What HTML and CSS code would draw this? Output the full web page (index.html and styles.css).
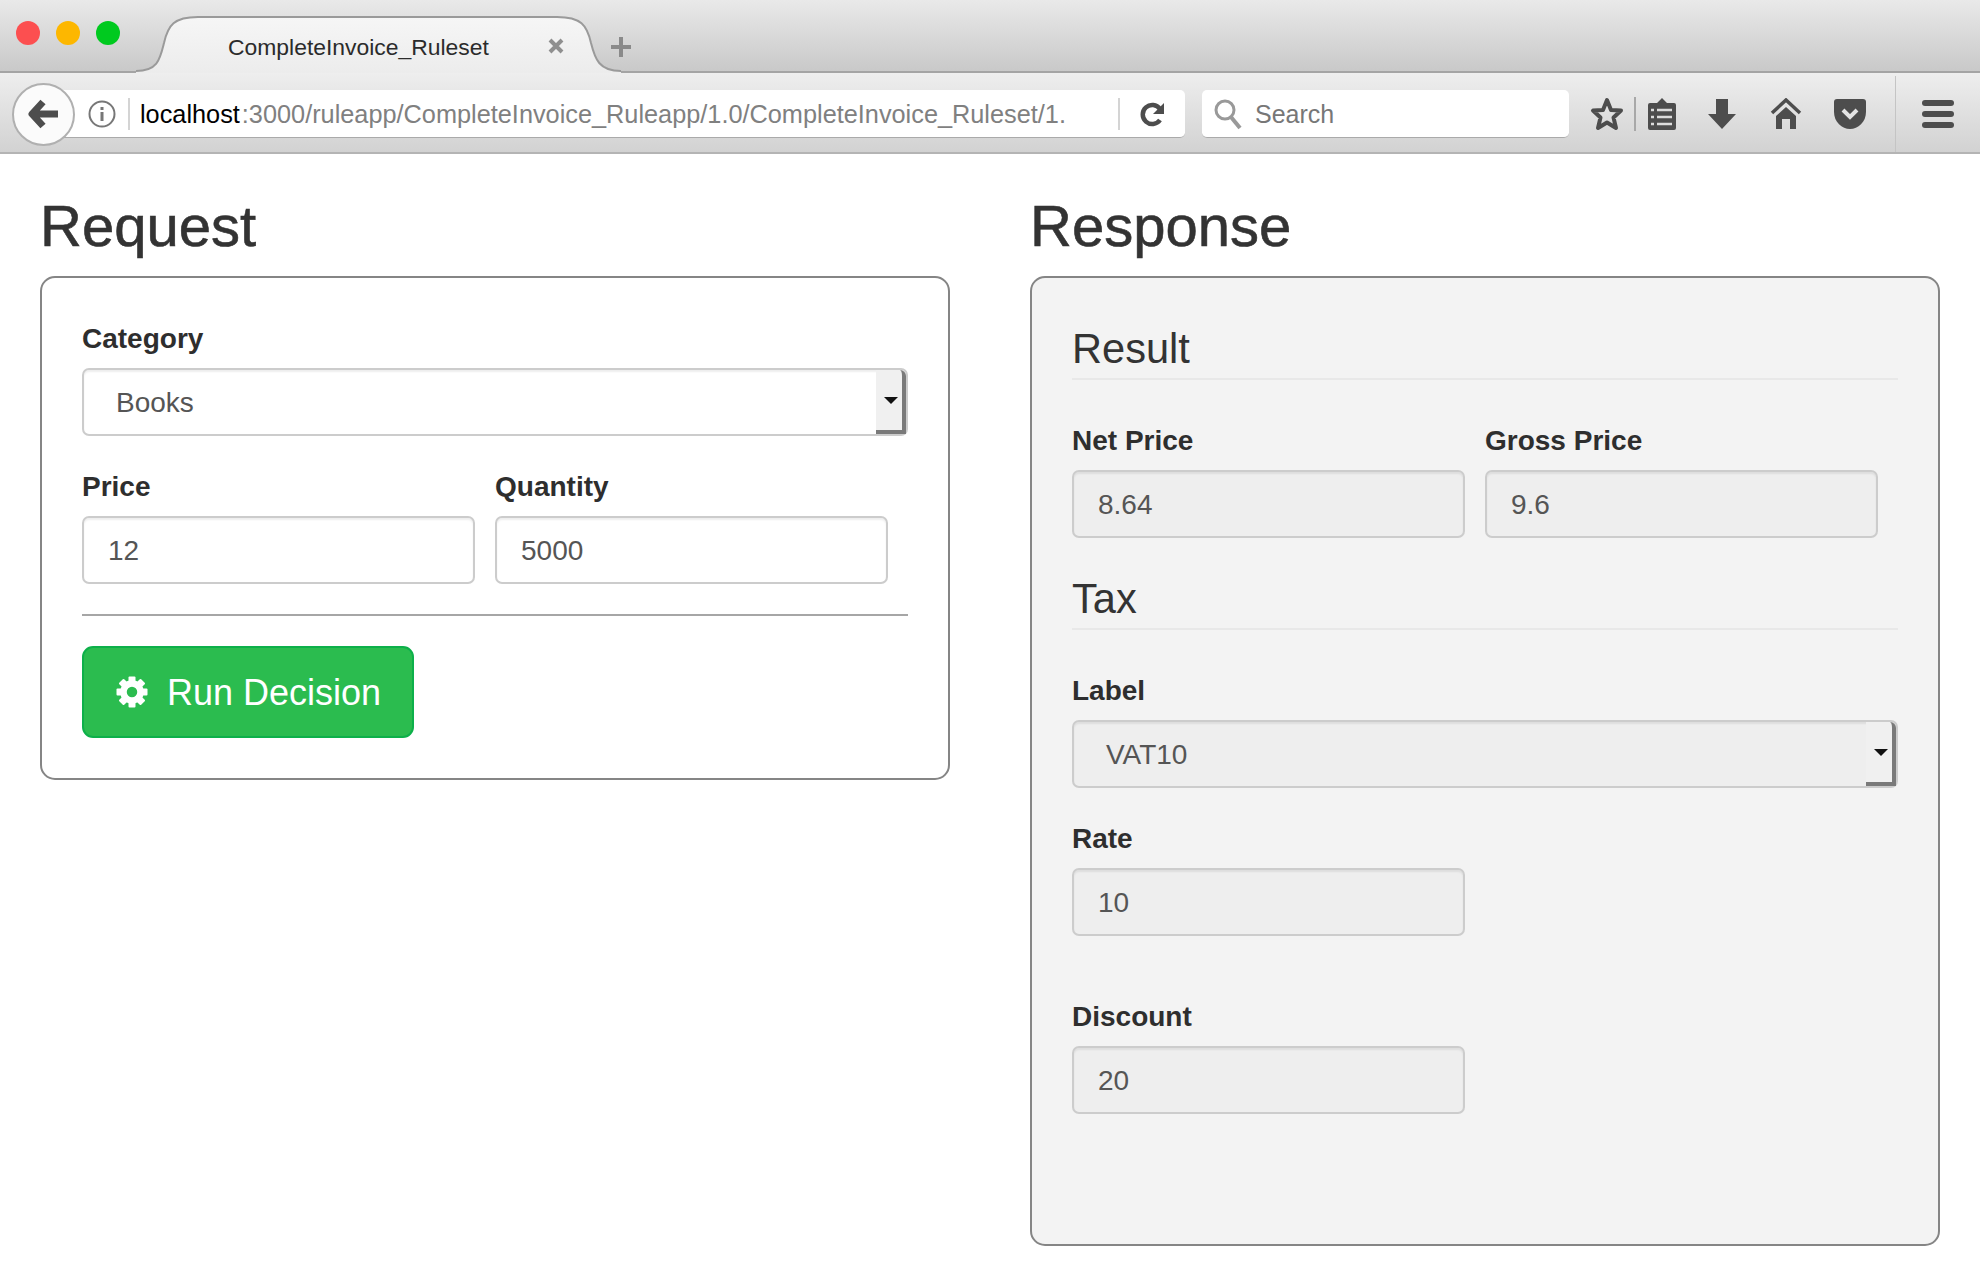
FILE: index.html
```html
<!DOCTYPE html>
<html lang="en">
<head>
    <meta charset="UTF-8">
    <title>CompleteInvoice_Ruleset</title>
    <link rel="stylesheet" href="styles.css">
</head>
<body>

<header class="browser">
    <div class="tabstrip">
        <div class="lights">
            <span class="light red"></span>
            <span class="light yellow"></span>
            <span class="light green"></span>
        </div>
        <div class="tab">
            <svg class="tab-shape" width="485" height="58" viewBox="0 0 485 58">
                <defs>
                    <linearGradient id="tabFill" x1="0" y1="0" x2="0" y2="1">
                        <stop offset="0" stop-color="#f6f6f6"/>
                        <stop offset="1" stop-color="#ececec"/>
                    </linearGradient>
                </defs>
                <path d="M0 56 C22 56 24 44 28 28 C32 10 38 2 62 2 L421 2 C445 2 451 10 455 28 C459 44 463 56 485 56 L485 58 L0 58 Z" fill="url(#tabFill)"/>
                <path d="M0 56 C22 56 24 44 28 28 C32 10 38 2 62 2 L421 2 C445 2 451 10 455 28 C459 44 463 56 485 56" fill="none" stroke="#9a9a9a" stroke-width="2"/>
            </svg>
            <span class="tab-title">CompleteInvoice_Ruleset</span>
            <svg class="tab-close" width="16" height="16" viewBox="0 0 16 16">
                <path d="M2 2 L14 14 M14 2 L2 14" stroke="#8f8f8f" stroke-width="4"/>
            </svg>
        </div>
        <svg class="newtab" width="22" height="22" viewBox="0 0 22 22">
            <path d="M11 1 V21 M1 11 H21" stroke="#8a8a8a" stroke-width="4"/>
        </svg>
    </div>

    <div class="toolbar">
        <div class="back">
            <svg width="32" height="32" viewBox="0 0 32 32">
                <path d="M15 4 L4 16 L15 28 M5 16 H30" fill="none" stroke="#4d4d4d" stroke-width="7" stroke-linejoin="round"/>
            </svg>
        </div>
        <div class="urlbar">
            <svg class="info" width="28" height="28" viewBox="0 0 28 28">
                <circle cx="14" cy="14" r="12.5" fill="none" stroke="#777" stroke-width="2"/>
                <rect x="12.5" y="12" width="3" height="9" fill="#777"/>
                <rect x="12.5" y="7" width="3" height="3" fill="#777"/>
            </svg>
            <span class="sep-v"></span>
            <span class="url"><span class="host">localhost</span>:3000/ruleapp/CompleteInvoice_Ruleapp/1.0/CompleteInvoice_Ruleset/1.</span>
            <span class="sep-v reload-sep"></span>
            <svg class="reload" width="26" height="28" viewBox="0 0 26 28">
                <path d="M20 9 A9.5 9.5 0 1 0 20 20" fill="none" stroke="#4d4d4d" stroke-width="4.5"/>
                <path d="M24 3 V14 H13 Z" fill="#4d4d4d"/>
            </svg>
        </div>
        <div class="searchbar">
            <svg width="30" height="32" viewBox="0 0 30 32">
                <circle cx="12" cy="12" r="9" fill="none" stroke="#999" stroke-width="3"/>
                <path d="M18 19 L27 30" stroke="#999" stroke-width="4"/>
            </svg>
            <span class="search-text">Search</span>
        </div>
        <div class="tools">
            <div class="tool star">
                <svg width="34" height="34" viewBox="0 0 34 34">
                    <path d="M17 3 L21 13 L31 13.5 L23.5 20.5 L26 31 L17 25.5 L8 31 L10.5 20.5 L3 13.5 L13 13 Z" fill="none" stroke="#4d4d4d" stroke-width="4" stroke-linejoin="round"/>
                </svg>
            </div>
            <span class="tool-sep"></span>
            <div class="tool clip">
                <svg width="30" height="34" viewBox="0 0 30 34">
                    <path d="M3 6 H10 L15 1 L20 6 H27 Q29 6 29 8 V31 Q29 33 27 33 H3 Q1 33 1 31 V8 Q1 6 3 6 Z" fill="#4d4d4d"/>
                    <path d="M10 13 H25 M10 20 H25 M10 27 H25" stroke="#dcdcdc" stroke-width="2.5"/>
                    <path d="M4 13 H7 M4 20 H7 M4 27 H7" stroke="#dcdcdc" stroke-width="2.5"/>
                </svg>
            </div>
            <div class="tool wide">
                <svg width="30" height="32" viewBox="0 0 30 32">
                    <path d="M9 1 H21 V16 H29 L15 31 L1 16 H9 Z" fill="#4d4d4d"/>
                </svg>
            </div>
            <div class="tool wide">
                <svg width="32" height="32" viewBox="0 0 32 32">
                    <path d="M2 15 L16 2 L30 15" fill="none" stroke="#4d4d4d" stroke-width="3.5"/>
                    <path d="M16 9 L26 18 V31 H20 V21 H12 V31 H6 V18 Z" fill="#4d4d4d"/>
                </svg>
            </div>
            <div class="tool wide">
                <svg width="32" height="32" viewBox="0 0 32 32">
                    <path d="M3 1 H29 Q32 1 32 4 V14 C32 24 24 31 16 31 C8 31 0 24 0 14 V4 Q0 1 3 1 Z" fill="#4d4d4d"/>
                    <path d="M9 12 L16 19 L23 12" fill="none" stroke="#e4e4e4" stroke-width="4"/>
                </svg>
            </div>
            <span class="tool-divider"></span>
            <div class="tool menu">
                <span class="bar"></span>
                <span class="bar"></span>
                <span class="bar"></span>
            </div>
        </div>
    </div>
</header>

<main class="page">
    <section>
        <h2>Request</h2>
        <div class="panel">
            <label class="field-label">Category</label>
            <div class="select"><span class="select-value">Books</span><span class="select-arrow"></span></div>

            <div class="row row-next">
                <div>
                    <label class="field-label">Price</label>
                    <input class="text-input" type="text" value="12">
                </div>
                <div>
                    <label class="field-label">Quantity</label>
                    <input class="text-input" type="text" value="5000">
                </div>
            </div>

            <hr class="divider">

            <button class="run-button" type="button">
                <svg width="32" height="32" viewBox="0 0 32 32">
                    <circle cx="16" cy="16" r="8.5" fill="none" stroke="#fff" stroke-width="6.5"/>
                    <g fill="#fff">
                        <rect x="12.5" y="0.5" width="7" height="6" rx="1"/>
                        <rect x="12.5" y="25.5" width="7" height="6" rx="1"/>
                        <rect x="0.5" y="12.5" width="6" height="7" rx="1"/>
                        <rect x="25.5" y="12.5" width="6" height="7" rx="1"/>
                        <rect x="12.5" y="0.5" width="7" height="6" rx="1" transform="rotate(45 16 16)"/>
                        <rect x="12.5" y="25.5" width="7" height="6" rx="1" transform="rotate(45 16 16)"/>
                        <rect x="0.5" y="12.5" width="6" height="7" rx="1" transform="rotate(45 16 16)"/>
                        <rect x="25.5" y="12.5" width="6" height="7" rx="1" transform="rotate(45 16 16)"/>
                    </g>
                </svg>
                <span class="run-text">Run Decision</span>
            </button>
        </div>
    </section>

    <section>
        <h2>Response</h2>
        <div class="panel panel-response">
            <h3>Result</h3>
            <div class="row row-first">
                <div>
                    <label class="field-label">Net Price</label>
                    <input class="text-input" type="text" value="8.64" disabled>
                </div>
                <div>
                    <label class="field-label">Gross Price</label>
                    <input class="text-input" type="text" value="9.6" disabled>
                </div>
            </div>

            <h3 class="tax-title">Tax</h3>
            <div class="row-first">
                <label class="field-label">Label</label>
                <div class="select select-disabled"><span class="select-value">VAT10</span><span class="select-arrow"></span></div>
            </div>

            <div class="row row-next">
                <div>
                    <label class="field-label">Rate</label>
                    <input class="text-input" type="text" value="10" disabled>
                </div>
            </div>

            <div class="row row-discount">
                <div>
                    <label class="field-label">Discount</label>
                    <input class="text-input" type="text" value="20" disabled>
                </div>
            </div>
        </div>
    </section>
</main>

</body>
</html>
```

FILE: styles.css
```css
body {
    font-family: "Liberation Sans", Arial, sans-serif;
    background-color: #fff;
    color: #333;
    margin: 0;
    padding: 0;
}

/* Browser chrome */
.browser {
    height: 154px;
    box-sizing: border-box;
}
.tabstrip {
    height: 73px;
    box-sizing: border-box;
    display: flex;
    align-items: flex-start;
    background: linear-gradient(#e9e9e9, #c9c9c9);
    border-bottom: 2px solid #a4a4a4;
}
.lights {
    display: flex;
    gap: 16px;
    margin: 21px 0 0 16px;
    width: 128px;
    flex-shrink: 0;
}
.light {
    width: 24px;
    height: 24px;
    border-radius: 50%;
}
.red { background-color: #fc4f50; }
.yellow { background-color: #fdb700; }
.green { background-color: #00ca1f; }
.tab {
    position: relative;
    width: 485px;
    height: 58px;
    margin-left: -8px;
    margin-top: 15px;
    flex-shrink: 0;
}
.tab-shape {
    position: absolute;
    top: 0;
    left: 0;
}
.tab-title {
    position: absolute;
    top: 18px;
    left: 92px;
    font-size: 22.9px;
    line-height: 28px;
    color: #2b2b2b;
}
.tab-close {
    position: absolute;
    top: 23px;
    left: 412px;
}
.newtab {
    margin: 36px 0 0 -11px;
}
.toolbar {
    height: 81px;
    box-sizing: border-box;
    display: flex;
    align-items: center;
    padding: 3px 0 0 12px;
    background: linear-gradient(#eeeeee, #d2d2d2);
    border-bottom: 2px solid #b4b4b4;
}
.back {
    position: relative;
    z-index: 1;
    width: 63px;
    height: 63px;
    box-sizing: border-box;
    border: 2px solid #b0b0b0;
    border-radius: 50%;
    background-color: #fbfbfb;
    display: flex;
    align-items: center;
    justify-content: center;
    flex-shrink: 0;
}
.urlbar {
    width: 1125px;
    height: 48px;
    margin-left: -15px;
    padding-left: 28px;
    box-sizing: border-box;
    display: flex;
    align-items: center;
    background-color: #fff;
    border-bottom: 1px solid #aaa;
    border-radius: 0 5px 5px 0;
    flex-shrink: 0;
}
.info {
    flex-shrink: 0;
}
.sep-v {
    width: 2px;
    height: 32px;
    background-color: #d4d4d4;
    margin-left: 12px;
    flex-shrink: 0;
}
.url {
    margin-left: 10px;
    padding-top: 2px;
    width: 930px;
    font-size: 25.3px;
    color: #808080;
    white-space: nowrap;
    overflow: hidden;
}
.host {
    color: #000;
    margin-right: 2px;
}
.reload-sep {
    margin-left: 48px;
}
.reload {
    margin-left: 20px;
}
.searchbar {
    width: 367px;
    height: 48px;
    margin-left: 17px;
    padding-left: 11px;
    box-sizing: border-box;
    display: flex;
    align-items: center;
    background-color: #fff;
    border-bottom: 1px solid #aaa;
    border-radius: 5px;
    flex-shrink: 0;
}
.search-text {
    margin-left: 12px;
    padding-top: 2px;
    font-size: 25px;
    color: #777;
}
.tools {
    display: flex;
    align-items: center;
    height: 100%;
    margin-left: 9px;
    flex: 1;
}
.tool {
    display: flex;
    align-items: center;
    justify-content: center;
    flex-shrink: 0;
}
.star { width: 56px; }
.star svg { margin-left: 1px; }
.clip { width: 54px; }
.clip svg { margin-right: 3px; }
.wide { width: 64px; }
.tool-sep {
    width: 2px;
    height: 34px;
    background-color: #a8a8a8;
}
.tool-divider {
    width: 1px;
    height: 100%;
    margin-left: 13px;
    background-color: #c4c4c4;
}
.menu {
    flex: 1;
    flex-direction: column;
    gap: 5px;
}
.bar {
    width: 32px;
    height: 6px;
    border-radius: 3px;
    background-color: #4d4d4d;
}

/* Page */
.page {
    display: grid;
    grid-template-columns: 910px 910px;
    column-gap: 80px;
    padding: 39px 40px 0;
    align-items: start;
}
h2 {
    font-size: 58px;
    line-height: 66px;
    font-weight: normal;
    margin: 0 0 17px;
    -webkit-text-stroke: 0.6px #333;
}
h3 {
    font-size: 41.6px;
    line-height: 58px;
    padding-top: 2px;
    font-weight: normal;
    margin: 0;
    border-bottom: 2px solid #e8e8e8;
}
.panel {
    border: 2px solid #858585;
    border-radius: 15px;
    padding: 40px 40px;
}
.panel-response {
    background-color: #f3f3f3;
    padding-bottom: 130px;
}
.tax-title {
    margin-top: 30px;
}
.field-label {
    display: block;
    font-size: 28px;
    font-weight: bold;
    line-height: 39px;
    padding-top: 1px;
    margin-bottom: 10px;
    color: #2e2e2e;
}
.row {
    display: grid;
    grid-template-columns: 393px 393px;
    column-gap: 20px;
}
.row-first {
    margin-top: 40px;
}
.row-next {
    margin-top: 30px;
}
.row-discount {
    margin-top: 60px;
}
.text-input {
    display: block;
    width: 100%;
    height: 68px;
    box-sizing: border-box;
    padding: 2px 24px 0;
    border: 2px solid #cccccc;
    border-radius: 7px;
    box-shadow: inset 0 2px 2px rgba(0, 0, 0, 0.07);
    font-family: inherit;
    font-size: 28px;
    color: #555;
    background-color: #fff;
    outline: none;
}
.text-input:disabled {
    background-color: #eeeeee;
    color: #555;
    -webkit-text-fill-color: #555;
    opacity: 1;
}
.select {
    height: 68px;
    box-sizing: border-box;
    display: flex;
    align-items: center;
    justify-content: space-between;
    border: 2px solid #cccccc;
    border-radius: 7px;
    box-shadow: inset 0 2px 2px rgba(0, 0, 0, 0.07);
    background-color: #fff;
}
.select-disabled {
    background-color: #eeeeee;
}
.select-value {
    margin-left: 32px;
    padding-top: 2px;
    font-size: 28px;
    color: #555;
}
.select-arrow {
    position: relative;
    width: 30px;
    height: 64px;
    box-sizing: border-box;
    background-color: #f0f0f0;
    border-right: 4px solid #7a7a7a;
    border-bottom: 4px solid #7a7a7a;
    border-radius: 0 6px 0 0;
}
.select-arrow::after {
    content: "";
    position: absolute;
    top: 27px;
    left: 8px;
    border-left: 7px solid transparent;
    border-right: 7px solid transparent;
    border-top: 7px solid #111;
}
.divider {
    height: 2px;
    margin: 30px 0;
    border: none;
    background-color: #a6a6a6;
}
.run-button {
    width: 332px;
    height: 92px;
    display: flex;
    align-items: center;
    gap: 19px;
    box-sizing: border-box;
    padding: 0 0 0 32px;
    background-color: #2bbc4f;
    border: 2px solid #0db04a;
    border-radius: 11px;
    color: #fff;
    font-family: inherit;
    font-size: 36px;
    cursor: pointer;
}
.run-text {
    padding-top: 2px;
}
```
